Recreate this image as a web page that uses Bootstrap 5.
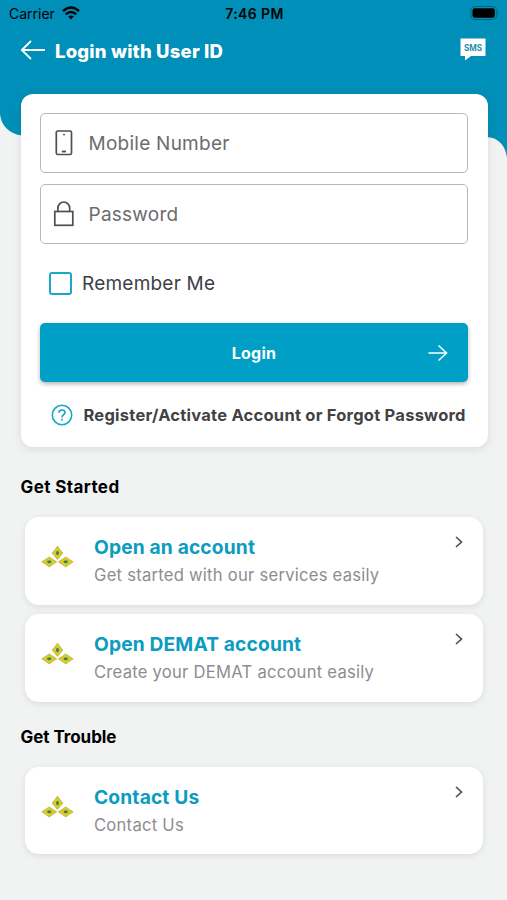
<!DOCTYPE html>
<html lang="en">
<head>
<meta charset="utf-8">
<meta name="viewport" content="width=device-width, initial-scale=1">
<title>Login with User ID</title>
<link href="https://cdn.jsdelivr.net/npm/bootstrap@5.3.0/dist/css/bootstrap.min.css" rel="stylesheet">
<style>
body { background: #f1f3f3; font-family: Inter, "Liberation Sans", sans-serif; color: #000; }
.screen { width: 507px; height: 900px; overflow: hidden; }
.backdrop { top: 0; left: 0; z-index: 0; }
.statusbar { height: 28px; padding: 0 7px 2px 9px; font-size: 14px; }
.statusbar > div { flex: 1 1 0; }
.wifi { margin-left: 7px; }
.clock { font-weight: 600; letter-spacing: .4px; }
.topbar { height: 66px; padding: 0 21px 22px 20px; }
.head-title { font-size: 18.5px; font-weight: 800; line-height: 24px; letter-spacing: .2px; color: #fff; padding-top: 1px; margin-left: 9px; }
.login-panel { margin: 0 19.5px 0 20.5px; height: 353px; padding: 19px 20px 0 19px; border-radius: 12px; background: #fff; box-shadow: 0 2px 9px rgba(0,0,0,.1); }
.entry { height: 59.5px; border: 1.5px solid #b7b7b7; border-radius: 5px; padding-left: 11px; font-size: 19px; color: #6c6c6e; }
.entry + .entry { margin-top: 11.5px; }
.entry svg { margin-right: 13px; }
.entry input { border: 0; outline: 0; background: none; padding: 2px 0 0; color: #6c6c6e; letter-spacing: .25px; }
.entry input::placeholder { color: #6c6c6e; opacity: 1; }
.remember { height: 24px; margin: 27.5px 0 0 9.5px; font-size: 19px; color: #3e3e48; min-height: 0; padding: 0; letter-spacing: .22px; }
.remember label { padding-top: 2px; }
.remember .form-check-input { width: 23px; height: 23px; margin: 0 10px 0 0; border: 2px solid #1ba7c8; border-radius: 3px; float: none; }
.btn-login { height: 59px; margin-top: 28px; background: #00a0c6; color: #fff; border: 0; border-radius: 5px; box-shadow: 0 2px 4px rgba(0,0,0,.3); font-size: 16px; font-weight: 700; padding: 0 20px; }
.btn-login:hover { background: #0094b8; color: #fff; }
.btn-login .btn-label { padding-left: 21px; letter-spacing: .2px; }
.help-link { margin: 21px 0 0 11.5px; height: 24px; font-size: 16.5px; font-weight: 700; color: #424244; white-space: nowrap; text-decoration: none; letter-spacing: .24px; }
.help-text { margin-left: 10.5px; }
.sect-title { font-size: 17px; line-height: 24px; font-weight: 700; margin: 28px 0 0 20.5px; letter-spacing: .4px; }
.sect-trouble { margin-top: 23px; letter-spacing: -.05px; }
.tiles { margin: 18px 24px 0 25px; gap: 9.5px; }
.tile { height: 87.5px; background: #fff; border-radius: 14px; box-shadow: 0 2px 7px rgba(0,0,0,.09); padding: 17px 19px 0 16px; text-decoration: none; }
.tile-title { font-size: 19.2px; line-height: 26px; font-weight: 700; color: #0b9cbf; letter-spacing: .15px; }
.tile-text { font-size: 16.6px; line-height: 24px; margin-top: 3px; color: #8d8d91; letter-spacing: .25px; }
.emblem { margin: 11px 20px 0 0; }
.chev { margin-top: 1px; }
</style>
</head>
<body>
<svg width="0" height="0" class="position-absolute" aria-hidden="true">
  <symbol id="emblem" viewBox="0 0 34 24">
    <g fill="#dcc828" stroke="#b3b548" stroke-width=".8">
      <path d="M17 .8Q19.700 4.700 22.600 8Q19.700 11.300 17 14.700Q14.300 11.300 11.400 8Q14.300 4.700 17 .8Z"/>
      <path d="M.8 17Q5.200 14.200 8.500 11.900Q11.800 14.200 16.200 17Q11.800 19.800 8.500 22.300Q5.200 19.800 .8 17Z"/>
      <path d="M17.800 17Q22.200 14.200 25.500 11.900Q28.800 14.200 33.200 17Q28.800 19.800 25.500 22.300Q22.200 19.800 17.800 17Z"/>
    </g>
    <g fill="#23845f"><ellipse cx="17" cy="8" rx="1.500" ry="2.100"/><ellipse cx="8.500" cy="17" rx="2.200" ry="1.500"/><ellipse cx="25.500" cy="17" rx="2.200" ry="1.500"/></g>
  </symbol>
  <symbol id="chev" viewBox="0 0 10 14"><path d="M2 2L7.500 7L2 12" fill="none" stroke="#4b4b4e" stroke-width="1.600"/></symbol>
</svg>
<div class="screen position-relative">
  <svg class="backdrop position-absolute" width="507" height="160" aria-hidden="true"><path d="M0 0H507V158C506 146 498 137 486 137V135.500H22C10 134 1 126 0 114Z" fill="#008fb8"/></svg>
  <div class="position-relative">
    <div class="statusbar d-flex align-items-center">
      <div class="d-flex align-items-center"><span>Carrier</span>
        <svg class="wifi" width="18" height="14" viewBox="0 0 18 14"><path d="M9 13.500L6.200 10.600Q9 8.500 11.800 10.600Z"/><path d="M1 5.200Q9-2 17 5.200M3.700 8.400Q9 3.700 14.300 8.400" fill="none" stroke="#000" stroke-width="2.400"/></svg>
      </div>
      <span class="clock">7:46 PM</span>
      <div class="d-flex justify-content-end"><svg width="30" height="14" viewBox="0 0 30 14"><rect x=".8" y=".5" width="26" height="13" rx="4" fill="none" stroke="#006783" stroke-width="1"/><rect x="2.500" y="2.300" width="22.300" height="9.400" rx="2.300"/><path d="M28 5Q29.500 7 28 9Z" fill="#006783"/></svg></div>
    </div>
    <header class="topbar d-flex align-items-center">
      <svg width="26" height="20" viewBox="0 0 26 20" fill="none" stroke="#fff" stroke-width="1.800"><path d="M25 10H1.800M11 1L1.800 10L11 19"/></svg>
      <h1 class="head-title mb-0">Login with User ID</h1>
      <svg class="ms-auto" width="26" height="24" viewBox="0 0 26 24"><path d="M.5 .5H25.500V18H11L5 22.500V18H.5Z" fill="#fff"/><text x="13" y="13" text-anchor="middle" font-family="Roboto, sans-serif" font-weight="700" font-size="9.800" fill="#178fb0" textLength="18" lengthAdjust="spacingAndGlyphs">SMS</text></svg>
    </header>
    <main>
      <form class="login-panel">
        <div class="entry d-flex align-items-center">
          <svg width="24" height="28" viewBox="0 0 24 28" fill="none" stroke="#4e4e55" stroke-width="1.700"><rect x="4.300" y="2" width="15.200" height="23.500" rx="1.500"/><path d="M11 5.700H13" stroke-width="1.300"/><path d="M9.800 22.500H14" stroke-width="1.800"/></svg>
          <input type="text" class="flex-grow-1" placeholder="Mobile Number" aria-label="Mobile Number">
        </div>
        <div class="entry d-flex align-items-center">
          <svg width="24" height="28" viewBox="0 0 24 28" fill="none" stroke="#4e4e55" stroke-width="1.700"><rect x="2.800" y="11.500" width="18" height="13.800"/><path d="M5.900 11.500V8.200A5.900 6.200 0 0 1 17.700 8.200V11.500"/></svg>
          <input type="password" class="flex-grow-1" placeholder="Password" aria-label="Password">
        </div>
        <div class="remember form-check d-flex align-items-center"><input id="remember" class="form-check-input" type="checkbox"><label for="remember">Remember Me</label></div>
        <button type="button" class="btn btn-login w-100 d-flex align-items-center"><span class="btn-label flex-grow-1 text-center">Login</span>
          <svg width="20" height="18" viewBox="0 0 20 18" fill="none" stroke="#fff" stroke-width="1.500"><path d="M.5 9H18.500M10.500 1.500L18.500 9L10.500 16.500"/></svg>
        </button>
        <a href="#" class="help-link d-flex align-items-center">
          <svg width="22" height="22" viewBox="0 0 22 22" fill="none" stroke="#1ba7c8" stroke-width="1.600"><circle cx="11" cy="11" r="9.700"/><path d="M8 8.800Q8 6 11 6Q14 6 14 8.600Q14 10 12.300 11Q11 11.700 11 13.400M11 14.800V16.500" stroke-width="1.700"/></svg>
          <span class="help-text">Register/Activate Account or Forgot Password</span>
        </a>
      </form>
      <h2 class="sect-title">Get Started</h2>
      <div class="tiles d-flex flex-column">
        <a href="#" class="tile d-flex align-items-start">
          <svg class="emblem" width="33" height="24"><use href="#emblem"/></svg>
          <div class="flex-grow-1"><div class="tile-title">Open an account</div><div class="tile-text">Get started with our services easily</div></div>
          <svg class="chev" width="10" height="14"><use href="#chev"/></svg>
        </a>
        <a href="#" class="tile d-flex align-items-start">
          <svg class="emblem" width="33" height="24"><use href="#emblem"/></svg>
          <div class="flex-grow-1"><div class="tile-title">Open DEMAT account</div><div class="tile-text">Create your DEMAT account easily</div></div>
          <svg class="chev" width="10" height="14"><use href="#chev"/></svg>
        </a>
      </div>
      <h2 class="sect-title sect-trouble">Get Trouble</h2>
      <div class="tiles">
        <a href="#" class="tile d-flex align-items-start">
          <svg class="emblem" width="33" height="24"><use href="#emblem"/></svg>
          <div class="flex-grow-1"><div class="tile-title">Contact Us</div><div class="tile-text">Contact Us</div></div>
          <svg class="chev" width="10" height="14"><use href="#chev"/></svg>
        </a>
      </div>
    </main>
  </div>
</div>
<script src="https://cdn.jsdelivr.net/npm/bootstrap@5.3.0/dist/js/bootstrap.bundle.min.js"></script>
</body>
</html>
